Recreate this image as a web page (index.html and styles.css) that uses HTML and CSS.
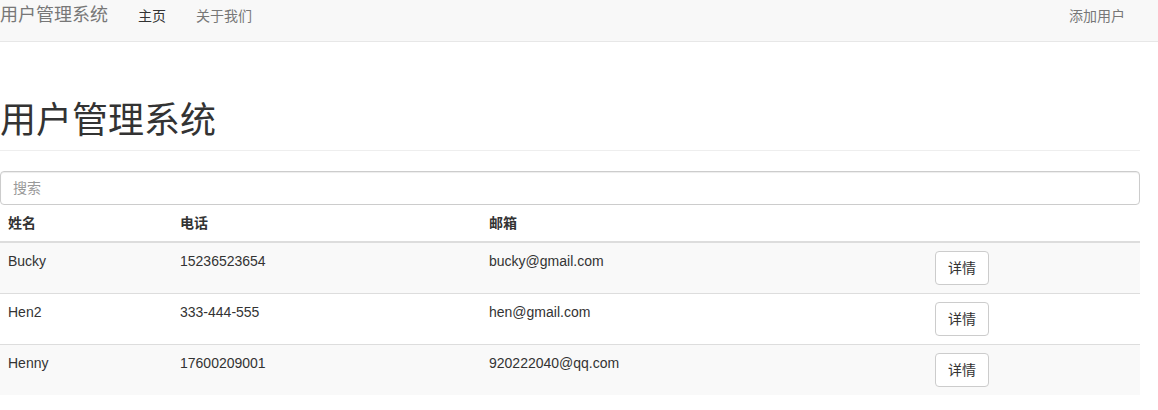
FILE: index.html
```html
<!DOCTYPE html>
<html lang="zh-CN">
<head>
<meta charset="utf-8">
<title>用户管理系统</title>
<link rel="stylesheet" href="styles.css">
</head>
<body>
<nav class="navbar">
  <div class="container nav-inner">
    <a class="brand" href="#">用户管理系统</a>
    <ul class="nav">
      <li><a class="active" href="#">主页</a></li>
      <li><a href="#">关于我们</a></li>
    </ul>
    <ul class="nav nav-right">
      <li><a href="#">添加用户</a></li>
    </ul>
  </div>
</nav>
<main class="container">
  <div class="page-header">
    <h1>用户管理系统</h1>
  </div>
  <input class="search" type="text" placeholder="搜索">
  <table class="table">
    <thead>
      <tr><th class="c-name">姓名</th><th class="c-phone">电话</th><th class="c-mail">邮箱</th><th></th></tr>
    </thead>
    <tbody>
      <tr><td>Bucky</td><td>15236523654</td><td>bucky@gmail.com</td><td><button class="btn">详情</button></td></tr>
      <tr><td>Hen2</td><td>333-444-555</td><td>hen@gmail.com</td><td><button class="btn">详情</button></td></tr>
      <tr><td>Henny</td><td>17600209001</td><td>920222040@qq.com</td><td><button class="btn">详情</button></td></tr>
    </tbody>
  </table>
</main>
</body>
</html>
```
FILE: styles.css
```css
* { box-sizing: border-box; }
html, body {
  margin: 0;
  padding: 0;
  background: #fff;
}
body {
  font-family: "Liberation Sans", Arial, "Noto Sans CJK SC", sans-serif;
  font-size: 14px;
  line-height: 20px;
  color: #333;
}
.container {
  width: 1140px;
}
.navbar {
  background: #f8f8f8;
  border-bottom: 1px solid #e7e7e7;
  height: 42px;
}
.nav-inner {
  display: flex;
  align-items: flex-start;
}
.brand {
  font-size: 18px;
  line-height: 20px;
  padding: 5px 15px 0 0;
  color: #777;
  text-decoration: none;
}
.nav {
  list-style: none;
  margin: 0;
  padding: 0;
  display: flex;
}
.nav a {
  display: block;
  padding: 6px 15px 15px;
  line-height: 20px;
  color: #777;
  text-decoration: none;
  font-size: 14px;
}
.nav a.active {
  color: #333;
}
.nav-right {
  margin-left: auto;
}
.page-header {
  margin-top: 59px;
  padding-bottom: 9px;
  border-bottom: 1px solid #eee;
  margin-bottom: 20px;
}
.page-header h1 {
  margin: 0;
  font-size: 36px;
  font-weight: 400;
  line-height: 40px;
  color: #333;
}
.search {
  display: block;
  width: 100%;
  height: 34px;
  padding: 6px 12px;
  font-family: inherit;
  font-size: 14px;
  color: #555;
  border: 1px solid #ccc;
  border-radius: 4px;
  box-shadow: inset 0 1px 1px rgba(0,0,0,.075);
  outline: none;
}
.search::placeholder { color: #999; }
.table {
  width: 100%;
  border-collapse: collapse;
  border-spacing: 0;
}
.table th, .table td {
  padding: 8px;
  text-align: left;
  vertical-align: top;
  line-height: 20px;
}
.table th {
  font-weight: bold;
  border-bottom: 2px solid #ddd;
}
.table td {
  border-top: 1px solid #ddd;
}
.c-name { width: 172px; }
.c-phone { width: 309px; }
.c-mail { width: 446px; }
.table tbody tr:nth-child(odd) { background: #f9f9f9; }
.table tbody tr:first-child td { border-top: 0; }
.btn {
  display: inline-block;
  height: 34px;
  padding: 6px 12px;
  font-family: inherit;
  font-size: 14px;
  line-height: 20px;
  color: #333;
  background: #fff;
  border: 1px solid #ccc;
  border-radius: 4px;
  cursor: pointer;
}
```
